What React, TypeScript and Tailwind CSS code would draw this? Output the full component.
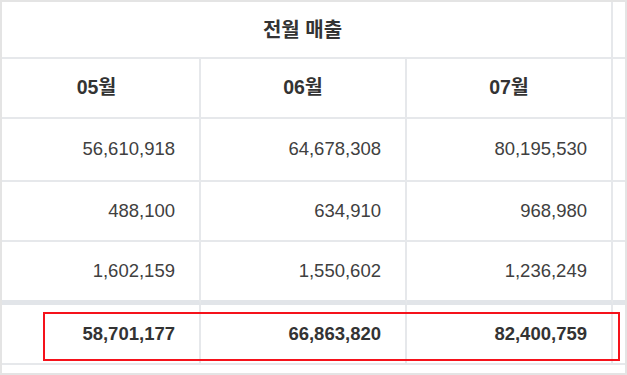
import React from 'react';

const months = ['05월', '06월', '07월'];

const rows = [
  ['56,610,918', '64,678,308', '80,195,530'],
  ['488,100', '634,910', '968,980'],
  ['1,602,159', '1,550,602', '1,236,249'],
];

const totals = ['58,701,177', '66,863,820', '82,400,759'];

const rowHeights = ['h-[63px]', 'h-[60px]', 'h-[63px]'];

export default function App() {
  return (
    <div
      className="relative w-[627px] h-[375px] bg-white border-2 border-[#e4e4e4] text-[18.5px] leading-none"
      style={{ fontFamily: '"Liberation Sans", "Noto Sans CJK KR", Arial, sans-serif' }}
    >
      <div className="grid grid-cols-[199px_206px_206px_1fr]">
        {/* title row */}
        <div className="col-span-3 h-[57px] flex items-center justify-center border-r-2 border-b-2 border-[#e6e8eb] font-bold text-[20px] text-[#333] pr-2">
          전월 매출
        </div>
        <div className="h-[57px] border-b-2 border-[#e6e8eb]" />

        {/* month header */}
        {months.map((m, i) => (
          <div
            key={m}
            className={`h-[60px] flex items-center justify-center border-r-2 border-b-2 border-[#e6e8eb] font-bold text-[19.5px] text-[#333] ${
              i === 0 ? 'pr-2' : ''
            }`}
          >
            {m}
          </div>
        ))}
        <div className="h-[60px] border-b-2 border-[#e6e8eb]" />

        {/* data rows */}
        {rows.map((row, i) => (
          <React.Fragment key={i}>
            {row.map((v, j) => (
              <div
                key={j}
                className={`${rowHeights[i]} flex items-center justify-end pr-6 border-r-2 border-[#e6e8eb] text-[#404040] ${
                  i === 2 ? 'border-b-[5px] border-b-[#e2e5e9]' : 'border-b-2'
                }`}
              >
                {v}
              </div>
            ))}
            <div
              className={`${rowHeights[i]} border-[#e6e8eb] ${
                i === 2 ? 'border-b-[5px] border-b-[#e2e5e9]' : 'border-b-2'
              }`}
            />
          </React.Fragment>
        ))}

        {/* totals */}
        {totals.map((v) => (
          <div
            key={v}
            className="h-[60px] flex items-center justify-end pr-6 border-r-2 border-b-2 border-[#e6e8eb] font-bold text-[#333]"
          >
            {v}
          </div>
        ))}
        <div className="h-[60px] border-b-2 border-[#e6e8eb]" />
      </div>

      {/* highlight box */}
      <div className="absolute left-[41px] top-[310px] w-[577px] h-[49px] border-2 border-[#f5121b]" />
    </div>
  );
}
